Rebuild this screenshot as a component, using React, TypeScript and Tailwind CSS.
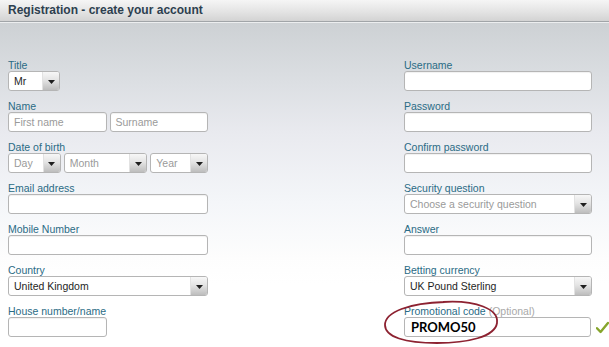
import type { ReactNode } from "react";

const font = { fontFamily: '"Liberation Sans", Arial, sans-serif' };

function Label({ children }: { children: ReactNode }) {
  return <div className="h-[13px] pt-px text-[10.5px] leading-[12px] text-[#2a6b85]">{children}</div>;
}

function Input({ w = "w-[200px]", placeholder }: { w?: string; placeholder?: string }) {
  return (
    <div
      className={`${w} h-5 rounded-[3px] border border-[#b5b5b5] bg-white pl-[5px] text-[10.5px] leading-[18px] text-[#9a9a9a] shadow-[inset_0_1px_1px_rgba(0,0,0,0.06)]`}
    >
      {placeholder}
    </div>
  );
}

function Select({ w = "w-[200px]", value, placeholder }: { w?: string; value?: string; placeholder?: string }) {
  return (
    <div className={`${w} flex h-5 overflow-hidden rounded-[3px] border border-[#b5b5b5] bg-white`}>
      <span
        className={`flex-1 truncate pl-[5px] text-[10.5px] leading-[18px] ${value ? "text-[#1e1e1e]" : "text-[#9a9a9a]"}`}
      >
        {value ?? placeholder}
      </span>
      <span className="flex w-[17px] items-center justify-center border-l border-[#e2e2e2] bg-[linear-gradient(to_bottom,#f7f7f7,#e4e4e4_45%,#bdbdbd)] pt-[2px]">
        <svg width="7" height="4" viewBox="0 0 7 4">
          <path d="M0 0h7L3.5 4z" fill="#1f1f1f" />
        </svg>
      </span>
    </div>
  );
}

function Row({ label, children }: { label: ReactNode; children: ReactNode }) {
  return (
    <div className="mb-2">
      <Label>{label}</Label>
      {children}
    </div>
  );
}

export default function App() {
  return (
    <div className="h-[347px] w-[609px] overflow-hidden" style={font}>
      <div className="h-[22px] border-b border-[#a1a5a8] bg-[linear-gradient(to_bottom,#f5f5f5,#e2e2e2_60%,#d3d3d3)] pl-2 text-[12px] font-bold leading-[21px] text-[#2d3f4f]">
        Registration - create your account
      </div>
      <div className="h-px bg-[#eceeef]" />
      <div className="flex h-[324px] justify-between bg-[linear-gradient(to_bottom,#cdd1d4_0px,#dcdfe3_60px,#e9eaef_110px,#f4f6f9_180px,#fdfdfd_235px,#ffffff_260px)] pl-2 pt-[35px]">
        <div className="w-[200px]">
          <Row label="Title">
            <Select w="w-[52px]" value="Mr" />
          </Row>
          <Row label="Name">
            <div className="flex gap-[3px]">
              <Input w="w-[99px]" placeholder="First name" />
              <Input w="w-[99px]" placeholder="Surname" />
            </div>
          </Row>
          <Row label="Date of birth">
            <div className="flex gap-[3px]">
              <Select w="w-[53px]" placeholder="Day" />
              <Select w="w-[84px]" placeholder="Month" />
              <Select w="w-[58px]" placeholder="Year" />
            </div>
          </Row>
          <Row label="Email address">
            <Input />
          </Row>
          <Row label="Mobile Number">
            <Input />
          </Row>
          <Row label="Country">
            <Select value="United Kingdom" />
          </Row>
          <Row label="House number/name">
            <Input w="w-[99px]" />
          </Row>
        </div>

        <div className="w-[205px]">
          <Row label="Username">
            <Input w="w-[188px]" />
          </Row>
          <Row label="Password">
            <Input w="w-[188px]" />
          </Row>
          <Row label="Confirm password">
            <Input w="w-[188px]" />
          </Row>
          <Row label="Security question">
            <Select w="w-[188px]" placeholder="Choose a security question" />
          </Row>
          <Row label="Answer">
            <Input w="w-[188px]" />
          </Row>
          <Row label="Betting currency">
            <Select w="w-[188px]" value="UK Pound Sterling" />
          </Row>
          <div className="relative">
            <Label>
              Promotional code <span className="text-[#a9a9a9]">(Optional)</span>
            </Label>
            <div className="flex items-center gap-[5px]">
              <div className="h-5 w-[188px] rounded-[3px] border border-[#b5b5b5] bg-white pl-[6px] text-[13px] font-bold leading-[18px] text-black" style={{ fontFamily: "Lato, 'Open Sans', sans-serif" }}>
                PROMO50
              </div>
              <svg width="13" height="13" viewBox="0 0 13 13" className="mt-[1px]">
                <path d="M1 7.2 L4.6 11 L12 2" fill="none" stroke="#86a52c" strokeWidth="2.4" strokeLinecap="round" strokeLinejoin="round" />
              </svg>
            </div>
            <svg width="122" height="50" viewBox="0 0 122 50" className="pointer-events-none absolute left-[-23px] top-[-7px]">
              <path
                d="M62 5 C 95 3, 118 12, 116 26 C 114 40, 86 46, 56 46 C 24 46, 4 40, 4 28 C 4 15, 28 6, 64 5"
                fill="none"
                stroke="#8d2231"
                strokeWidth="1.8"
              />
            </svg>
          </div>
        </div>
      </div>
    </div>
  );
}
